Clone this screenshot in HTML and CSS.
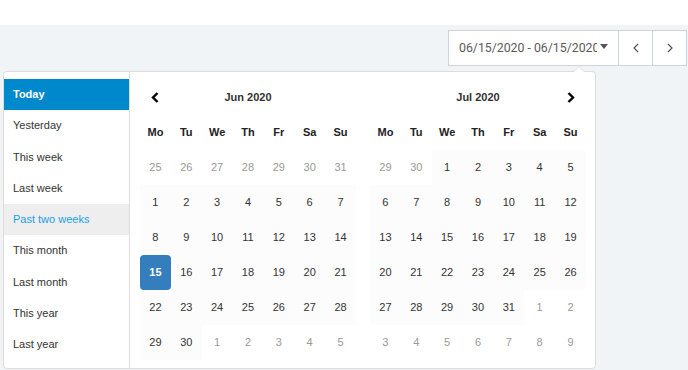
FILE: index.html
```html
<!DOCTYPE html>
<html lang="en">
<head>
  <meta charset="UTF-8" />
  <title>Date range</title>
  <link rel="stylesheet" href="styles.css">
</head>
<body>
  <div class="topbar"></div>

  <section class="board">
    <div class="toolbar">
      <div class="range-input">
        <span class="range-text">06/15/2020 - 06/15/2020</span>
        <span class="caret"></span>
      </div>
      <button class="step">
        <svg width="6" height="10" viewBox="0 0 6 10"><path d="M5 1 L1 5 L5 9" fill="none" stroke="#555" stroke-width="1.2"/></svg>
      </button>
      <button class="step">
        <svg width="6" height="10" viewBox="0 0 6 10"><path d="M1 1 L5 5 L1 9" fill="none" stroke="#555" stroke-width="1.2"/></svg>
      </button>
    </div>

    <div class="picker">
      <ul class="ranges">
        <li class="active">Today</li>
        <li>Yesterday</li>
        <li>This week</li>
        <li>Last week</li>
        <li class="hover">Past two weeks</li>
        <li>This month</li>
        <li>Last month</li>
        <li>This year</li>
        <li>Last year</li>
      </ul>

      <div class="calendars">
        <table class="cal">
          <colgroup><col><col><col><col><col><col><col></colgroup>
          <thead>
            <tr class="month-row">
              <th class="nav"><svg width="8" height="11" viewBox="0 0 8 11"><path d="M6.5 1 L2 5.5 L6.5 10" fill="none" stroke="#000" stroke-width="2.4"/></svg></th>
              <th colspan="5" class="month">Jun 2020</th>
              <th></th>
            </tr>
            <tr><th>Mo</th><th>Tu</th><th>We</th><th>Th</th><th>Fr</th><th>Sa</th><th>Su</th></tr>
          </thead>
          <tbody>
            <tr><td class="off">25</td><td class="off">26</td><td class="off">27</td><td class="off">28</td><td class="off">29</td><td class="off">30</td><td class="off">31</td></tr>
            <tr><td class="in">1</td><td class="in">2</td><td class="in">3</td><td class="in">4</td><td class="in">5</td><td class="in">6</td><td class="in">7</td></tr>
            <tr><td class="in">8</td><td class="in">9</td><td class="in">10</td><td class="in">11</td><td class="in">12</td><td class="in">13</td><td class="in">14</td></tr>
            <tr><td class="selected">15</td><td class="in">16</td><td class="in">17</td><td class="in">18</td><td class="in">19</td><td class="in">20</td><td class="in">21</td></tr>
            <tr><td class="in">22</td><td class="in">23</td><td class="in">24</td><td class="in">25</td><td class="in">26</td><td class="in">27</td><td class="in">28</td></tr>
            <tr><td class="in">29</td><td class="in">30</td><td class="off">1</td><td class="off">2</td><td class="off">3</td><td class="off">4</td><td class="off">5</td></tr>
          </tbody>
        </table>

        <table class="cal">
          <colgroup><col><col><col><col><col><col><col></colgroup>
          <thead>
            <tr class="month-row">
              <th></th>
              <th colspan="5" class="month">Jul 2020</th>
              <th class="nav"><svg width="8" height="11" viewBox="0 0 8 11"><path d="M1.5 1 L6 5.5 L1.5 10" fill="none" stroke="#000" stroke-width="2.4"/></svg></th>
            </tr>
            <tr><th>Mo</th><th>Tu</th><th>We</th><th>Th</th><th>Fr</th><th>Sa</th><th>Su</th></tr>
          </thead>
          <tbody>
            <tr><td class="off">29</td><td class="off">30</td><td class="in">1</td><td class="in">2</td><td class="in">3</td><td class="in">4</td><td class="in">5</td></tr>
            <tr><td class="in">6</td><td class="in">7</td><td class="in">8</td><td class="in">9</td><td class="in">10</td><td class="in">11</td><td class="in">12</td></tr>
            <tr><td class="in">13</td><td class="in">14</td><td class="in">15</td><td class="in">16</td><td class="in">17</td><td class="in">18</td><td class="in">19</td></tr>
            <tr><td class="in">20</td><td class="in">21</td><td class="in">22</td><td class="in">23</td><td class="in">24</td><td class="in">25</td><td class="in">26</td></tr>
            <tr><td class="in">27</td><td class="in">28</td><td class="in">29</td><td class="in">30</td><td class="in">31</td><td class="off">1</td><td class="off">2</td></tr>
            <tr><td class="off">3</td><td class="off">4</td><td class="off">5</td><td class="off">6</td><td class="off">7</td><td class="off">8</td><td class="off">9</td></tr>
          </tbody>
        </table>
      </div>
    </div>
  </section>
</body>
</html>
```

FILE: styles.css
```css
body {
  margin: 0;
  font-family: "Liberation Sans", Arial, sans-serif;
  background: #f1f4f7;
  color: #333;
}
.topbar {
  height: 25px;
  background: #fff;
}
.board {
  padding: 5px 1px 0 3px;
  height: 345px;
  box-sizing: border-box;
}

.toolbar {
  display: flex;
  justify-content: flex-end;
  height: 36px;
}
.range-input {
  display: flex;
  align-items: center;
  width: 171px;
  box-sizing: border-box;
  padding: 0 10px 0 10px;
  background: #fff;
  border: 1px solid #cbd5df;
  font-family: Roboto, sans-serif;
  font-size: 12.3px;
  color: #5a5a5a;
}
.range-text {
  flex: 1;
  overflow: hidden;
  white-space: nowrap;
}
.caret {
  margin-left: 3px;
  border-left: 4px solid transparent;
  border-right: 4px solid transparent;
  border-top: 5px solid #555;
  transform: translateY(-2px);
}
.step {
  width: 35px;
  margin-left: -1px;
  padding: 0;
  background: #fff;
  border: 1px solid #cbd5df;
  display: flex;
  align-items: center;
  justify-content: center;
}

.picker {
  position: relative;
  display: flex;
  width: 593px;
  height: 298px;
  margin-top: 5px;
  box-sizing: border-box;
  background: #fff;
  border: 1px solid #ddd;
  border-radius: 4px;
}
.picker:before {
  content: "";
  position: absolute;
  top: -6px;
  right: 10px;
  border-left: 6px solid transparent;
  border-right: 6px solid transparent;
  border-bottom: 6px solid #ddd;
}
.picker:after {
  content: "";
  position: absolute;
  top: -5px;
  right: 11px;
  border-left: 5px solid transparent;
  border-right: 5px solid transparent;
  border-bottom: 5px solid #fff;
}

.ranges {
  list-style: none;
  margin: 0;
  padding: 7px 0 0;
  width: 125px;
  border-right: 1px solid #ddd;
  font-size: 11px;
}
.ranges li {
  height: 31.3px;
  line-height: 31px;
  padding-left: 9px;
  color: #333;
}
.ranges li.active {
  background: #0088cc;
  color: #fff;
  font-weight: bold;
}
.ranges li.hover {
  background: #eee;
  color: #1b9ee6;
}

.calendars {
  display: flex;
  align-items: flex-start;
  gap: 14px;
  padding: 8px 0 0 10px;
}
.cal {
  border-collapse: collapse;
  table-layout: fixed;
  width: 216px;
  font-size: 11px;
}
.cal col {
  width: 30.8px;
}
.cal th,
.cal td {
  height: 35px;
  padding: 0;
  line-height: 13px;
  text-align: center;
}
.cal th {
  font-weight: bold;
  color: #222;
}
.cal .month {
  color: #333;
}
.cal .nav svg {
  display: block;
  margin: 0 auto;
}
.cal td.in {
  background: #fcfcfc;
  color: #333;
}
.cal td.off {
  color: #999;
}
.cal td.selected {
  background: #357ebd;
  color: #fff;
  font-weight: bold;
  border-radius: 4px;
}
```
